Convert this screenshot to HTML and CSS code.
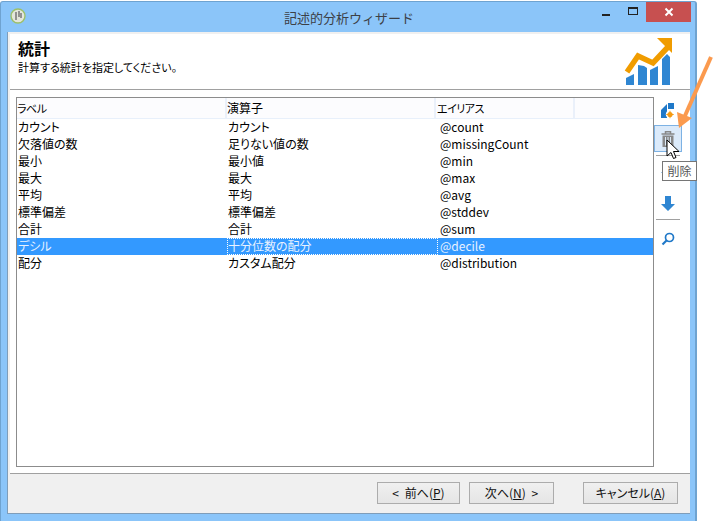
FILE: index.html
```html
<!DOCTYPE html>
<html lang="ja">
<head>
<meta charset="utf-8">
<title>記述的分析ウィザード</title>
<link rel="stylesheet" href="styles.css">
</head>
<body>
<div class="window">
  <div class="titlebar">
    <svg class="app-icon" width="16" height="16" viewBox="0 0 16 16"><circle cx="8" cy="8" r="7" fill="#e4e6dc" stroke="#9cc06a" stroke-width="1.4"/><path d="M6 4v8M9 3v6M11 5v5" stroke="#777" stroke-width="1.5" fill="none"/></svg>
    <div class="title">記述的分析ウィザード</div>
    <div class="controls">
      <div class="ctl"><span class="min"></span></div>
      <div class="ctl"><span class="max"></span></div>
      <div class="close"><svg width="10" height="10" viewBox="0 0 10 10"><path d="M1.500 1.500l7 7M8.500 1.500l-7 7" stroke="#fff" stroke-width="2"/></svg></div>
    </div>
  </div>
  <div class="client">
    <div class="header">
      <div class="head-text">
        <div class="head-title">統計</div>
        <div class="head-sub">計算する統計を指定してください。</div>
      </div>
      <svg class="logo" width="50" height="50" viewBox="0 0 50 50">
        <path d="M2 50V43L10 39V50zM14 50V30L20 31 23 33V50zM26 50V35L34 31V50zM38 50V24L43 19 46 22V50z" fill="#2f86d2"/>
        <path d="M3 37L14 21 29 28 44 12" stroke="#f09c00" stroke-width="5.500" fill="none"/>
        <path d="M33 3H48V18z" fill="#f09c00"/>
      </svg>
    </div>
    <div class="body">
      <div class="list">
        <div class="list-head">
          <div class="hcol c1 narrow">ラベル</div>
          <div class="hcol c2">演算子</div>
          <div class="hcol c3 narrow">エイリアス</div>
          <div class="hcol c4"></div>
        </div>
        <div class="row"><div class="cell c1">カウント</div><div class="cell c2">カウント</div><div class="cell c3">@count</div></div>
        <div class="row"><div class="cell c1">欠落値の数</div><div class="cell c2">足りない値の数</div><div class="cell c3">@missingCount</div></div>
        <div class="row"><div class="cell c1">最小</div><div class="cell c2">最小値</div><div class="cell c3">@min</div></div>
        <div class="row"><div class="cell c1">最大</div><div class="cell c2">最大</div><div class="cell c3">@max</div></div>
        <div class="row"><div class="cell c1">平均</div><div class="cell c2">平均</div><div class="cell c3">@avg</div></div>
        <div class="row"><div class="cell c1">標準偏差</div><div class="cell c2">標準偏差</div><div class="cell c3">@stddev</div></div>
        <div class="row"><div class="cell c1">合計</div><div class="cell c2">合計</div><div class="cell c3">@sum</div></div>
        <div class="row selected"><div class="cell c1">デシル</div><div class="cell c2 focus">十分位数の配分</div><div class="cell c3">@decile</div></div>
        <div class="row"><div class="cell c1">配分</div><div class="cell c2">カスタム配分</div><div class="cell c3">@distribution</div></div>
      </div>
      <div class="tools">
        <div class="tool first">
          <svg width="14" height="16" viewBox="0 0 14 16"><path d="M0 15V7L6 1V15z" fill="#1f78c8"/><path d="M7 0h6v6H7z" fill="#1f78c8"/><circle cx="9" cy="11.500" r="4.200" fill="#fff"/><circle cx="9" cy="11.500" r="2.600" fill="#f59a12"/><path d="M9 7.800v7.400M5.300 11.500h7.400" stroke="#f59a12" stroke-width="1"/></svg>
        </div>
        <div class="tool hot">
          <svg width="14" height="16" viewBox="0 0 14 16"><path d="M0.500 3h13M4.500 2.500V0.800h5V2.500" stroke="#888" stroke-width="1.500" fill="none"/><path d="M1.500 4.500h11V16h-11z" fill="#888"/><path d="M4.500 6v8.500M7 6v8.500M9.500 6v8.500" stroke="#dbe9f7" stroke-width="1"/></svg>
        </div>
        <div class="sep"></div>
        <div class="tool">
          <svg width="14" height="17" viewBox="0 0 14 17"><path d="M7 1L0 8h4v8h6V8h4z" fill="#2f86d2"/></svg>
        </div>
        <div class="tool">
          <svg width="14" height="17" viewBox="0 0 14 17"><path d="M4 1h6v8h4l-7 7-7-7h4z" fill="#2f86d2"/></svg>
        </div>
        <div class="sep next-sep"></div>
        <div class="tool">
          <svg width="14" height="14" viewBox="0 0 14 14"><circle cx="8.500" cy="5.500" r="4" fill="none" stroke="#1f78c8" stroke-width="1.700"/><path d="M5.500 8.500L1.500 12.500" stroke="#1f78c8" stroke-width="2.200"/></svg>
        </div>
      </div>
    </div>
    <div class="footer">
      <button class="btn prev">&lt; 前へ(<u>P</u>)</button>
      <button class="btn next">次へ(<u>N</u>) &gt;</button>
      <button class="btn cancel">キャンセル(<u>A</u>)</button>
    </div>
  </div>
</div>
<div class="tooltip">削除</div>
<svg class="arrow" width="50" height="90" viewBox="0 0 50 90"><path d="M41 7L14 68" stroke="#fb9a4e" stroke-width="4" fill="none"/><path d="M7 62L22 68 9 78z" fill="#fb9a4e"/></svg>
<svg class="cursor" width="14" height="21" viewBox="0 0 14 21"><path d="M1 1v16l4-3.500 2.500 6 2.500-1-2.500-6H13z" fill="#fff" stroke="#000" stroke-width="1"/></svg>
</body>
</html>
```
FILE: styles.css
```css
* { box-sizing: border-box; }
html, body { margin: 0; padding: 0; background: #fff; }
body {
  width: 718px;
  height: 521px;
  position: relative;
  overflow: hidden;
  font-family: "Noto Sans CJK JP", "Liberation Sans", sans-serif;
  font-feature-settings: "palt";
  font-size: 12px;
  color: #000;
}
.window {
  width: 697px;
  height: 520px;
  margin: 1px 0 0 0;
  background: #8bc5f9;
  border: 1px solid #6fa3d0;
  border-width: 1px 2px 0 1px;
  border-radius: 3px 3px 0 0;
  display: flex;
  flex-direction: column;
}
.titlebar {
  height: 30px;
  display: flex;
  align-items: flex-start;
  position: relative;
  flex: none;
}
.app-icon { margin: 6px 0 0 9px; }
.title {
  position: absolute;
  left: 0;
  right: 0;
  top: 6px;
  text-align: center;
  font-size: 13px;
  font-feature-settings: normal;
  line-height: 20px;
  color: #3c4046;
  padding-left: 2px;
}
.controls {
  margin-left: auto;
  margin-right: 4px;
  display: flex;
  position: relative;
}
.ctl { width: 30px; height: 20px; position: relative; }
.min { position: absolute; left: 16px; top: 12px; width: 8px; height: 2px; background: #222; }
.max { position: absolute; left: 12px; top: 5px; width: 10px; height: 8px; border: 1px solid #222; border-top-width: 2px; }
.close {
  width: 45px;
  height: 20px;
  background: #c75050;
  display: flex;
  align-items: center;
  justify-content: center;
}
.client {
  flex: 1;
  margin: 0 5px 7px 6px;
  background: #f0f0f0;
  border-bottom: 1px solid #7f9db9;
  border-left: 1px solid #7f9db9;
  padding-top: 2px;
  display: flex;
  flex-direction: column;
  min-height: 0;
}
.header {
  height: 56px;
  margin-left: 2px;
  background: #fff;
  border-bottom: 1px solid #a0a0a0;
  display: flex;
  justify-content: space-between;
  padding: 1px 16px 0 8px;
  flex: none;
}
.head-text { margin-top: 4px; }
.head-title { font-size: 16px; line-height: 18px; font-weight: 700; }
.head-sub { font-size: 11px; line-height: 16px; margin-top: 2px; }
.body {
  height: 384px;
  margin-left: 2px;
  background: #fff;
  border-bottom: 1px solid #a0a0a0;
  padding: 7px 0 6px 6px;
  display: flex;
  flex: none;
}
.list {
  width: 638px;
  border: 1px solid #8c8c8c;
  background: #fff;
  flex: none;
}
.list-head {
  display: flex;
  height: 21px;
  background: #fcfcfe;
  border-bottom: 1px solid #e8f0fb;
  font-size: 12px;
  line-height: 20px;
}
.hcol { border-right: 2px solid #eaf0fa; }
.hcol.c1 { width: 210px; }
.hcol.c2 { width: 209px; }
.hcol.c3 { width: 139px; padding-left: 1px; }
.hcol.c4 { flex: 1; border-right: 0; }
.narrow { font-size: 11px; letter-spacing: -0.5px; }
.row {
  display: flex;
  height: 17px;
  line-height: 15px;
  font-size: 12px;
}
.cell { padding-left: 1px; white-space: nowrap; }
.cell.c1 { width: 210px; }
.cell.c2 { width: 211px; }
.cell.c3 { flex: 1; padding-left: 2px; }
.selected { background: #3399ff; color: #e8f2ff; }
.focus { outline: 1px dotted #fff; outline-offset: -1px; }
.tools {
  flex: none;
  width: 28px;
  display: flex;
  flex-direction: column;
  align-items: flex-start;
}
.tool {
  width: 28px;
  height: 30px;
  display: flex;
  align-items: center;
  justify-content: center;
}
.tool.first { height: 28px; }
.tool.hot {
  background: #dbeafa;
  border: 1px solid #7db2e4;
  height: 27px;
  margin-bottom: 1px;
}
.sep { width: 24px; height: 1px; background: #a0a0a0; margin: 2px 0 2px 2px; }
.next-sep { margin-top: 1px; margin-bottom: 4px; }
.footer {
  flex: 1;
  display: flex;
  align-items: flex-start;
  padding: 8px 11px 0 369px;
}
.btn {
  height: 22px;
  padding: 0;
  font: inherit;
  font-size: 12px;
  word-spacing: 3px;
  line-height: 18px;
  color: #111;
  border: 1px solid #acacac;
  background: linear-gradient(#f0f0f0, #e5e5e5);
}
.prev { width: 83px; }
.next { width: 85px; margin-left: 9px; }
.cancel { width: 95px; margin-left: 29px; }
.tooltip {
  position: absolute;
  left: 662px;
  top: 161px;
  width: 35px;
  height: 20px;
  background: #fff;
  border: 1px solid #767676;
  font-size: 12px;
  line-height: 18px;
  text-align: center;
  color: #555;
}
.cursor { position: absolute; left: 666px; top: 139px; }
.arrow { position: absolute; left: 670px; top: 50px; }
```
